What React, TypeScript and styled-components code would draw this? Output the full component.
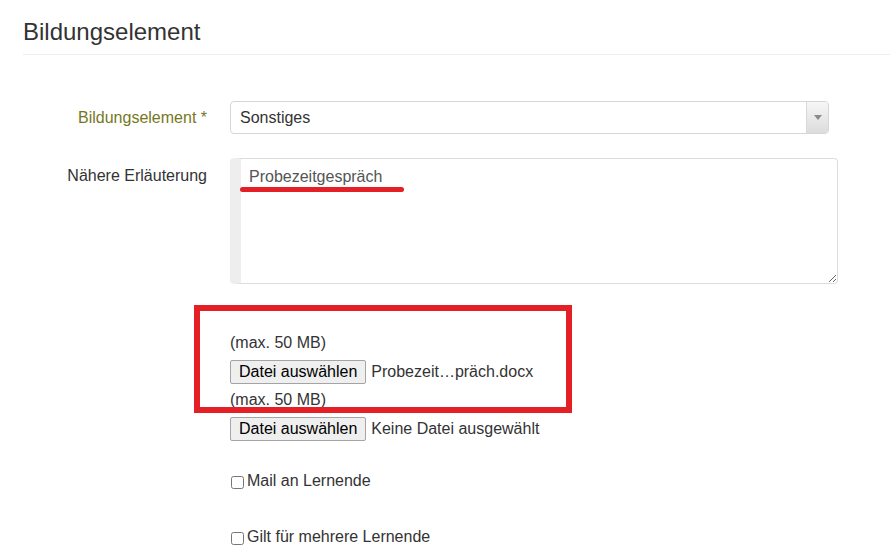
import React from "react";
import styled, { createGlobalStyle } from "styled-components";

const red = "#e41f26";
const text = "#333333";

const GlobalStyle = createGlobalStyle`
    html, body {
        margin: 0;
        padding: 0;
        background: #ffffff;
    }
    body {
        font-family: "Liberation Sans", Arial, sans-serif;
        font-size: 16px;
        color: ${text};
    }
`;

const Page = styled.div`
    width: 890px;
    height: 560px;
    padding-left: 23px;
    box-sizing: border-box;
    overflow: hidden;
`;

const Header = styled.div`
    padding: 19px 0 9px;
    border-bottom: 1px solid #eeeeee;
`;

const Title = styled.h2`
    margin: 0;
    font-size: 24px;
    line-height: 26px;
    font-weight: normal;
    color: ${text};
`;

const Form = styled.div`
    margin-top: 46px;
    display: flex;
    flex-direction: column;
`;

const Row = styled.div<{ $gap?: number }>`
    display: grid;
    grid-template-columns: 184px 1fr;
    column-gap: 23px;
    margin-top: ${(p) => p.$gap ?? 0}px;
`;

const Label = styled.label<{ $required?: boolean; $top?: number; $line?: number }>`
    text-align: right;
    color: ${(p) => (p.$required ? "#777722" : text)};
    padding-top: ${(p) => p.$top ?? 0}px;
    line-height: ${(p) => p.$line ?? 18}px;
`;

const SelectBox = styled.div`
    width: 599px;
    height: 33px;
    box-sizing: border-box;
    border: 1px solid #d6d6d6;
    border-radius: 4px;
    display: flex;
    align-items: stretch;
    overflow: hidden;
`;

const SelectValue = styled.div`
    flex: 1;
    padding-left: 9px;
    line-height: 32px;
    color: ${text};
`;

const ArrowBox = styled.div`
    width: 21px;
    border-left: 1px solid #d8d8d8;
    background: linear-gradient(#f6f6f6, #dcdcdc);
    display: flex;
    align-items: center;
    justify-content: center;

    &::after {
        content: "";
        border-left: 4px solid transparent;
        border-right: 4px solid transparent;
        border-top: 5px solid #8a8a8a;
    }
`;

const AreaWrap = styled.div`
    position: relative;
    width: 608px;
`;

const TextArea = styled.textarea`
    display: block;
    width: 608px;
    height: 126px;
    box-sizing: border-box;
    margin: 0;
    border: 1px solid #dddddd;
    border-left: 11px solid #eeeeee;
    border-radius: 4px;
    padding: 9px 8px;
    font-family: "Liberation Sans", Arial, sans-serif;
    font-size: 16px;
    line-height: 18px;
    color: #555555;
    outline: none;
`;

const Underline = styled.div`
    position: absolute;
    left: 10px;
    top: 29px;
    width: 164px;
    height: 5px;
    border-radius: 3px;
    background: ${red};
`;

const Files = styled.div`
    position: relative;
    margin: 50px 0 0 207px;
    display: flex;
    flex-direction: column;
    align-items: flex-start;
`;

const Marker = styled.div`
    position: absolute;
    left: -36px;
    top: -29px;
    width: 378px;
    height: 108px;
    box-sizing: border-box;
    border: 6px solid ${red};
    pointer-events: none;
`;

const Hint = styled.div`
    line-height: 18px;
    margin-bottom: 8px;
`;

const FileRow = styled.div<{ $gap?: number }>`
    display: flex;
    align-items: center;
    gap: 5px;
    height: 24px;
    margin-bottom: ${(p) => p.$gap ?? 0}px;
`;

const PickButton = styled.button`
    height: 24px;
    padding: 0 8px;
    font-family: "Liberation Sans", Arial, sans-serif;
    font-size: 16px;
    color: #000000;
    background: #efefef;
    border: 1px solid #a4a4a4;
    border-radius: 2px;
`;

const FileName = styled.span`
    color: ${text};
`;

const CheckRow = styled.label<{ $gap: number }>`
    display: flex;
    align-items: center;
    gap: 3px;
    line-height: 18px;
    margin-top: ${(p) => p.$gap}px;
    color: ${text};
`;

const Check = styled.input`
    width: 13px;
    height: 13px;
    margin: 3px 0 0 1px;
`;

function App() {
    return (
        <Page>
            <GlobalStyle />
            <Header>
                <Title>Bildungselement</Title>
            </Header>
            <Form>
                <Row>
                    <Label $required $line={33}>Bildungselement *</Label>
                    <SelectBox>
                        <SelectValue>Sonstiges</SelectValue>
                        <ArrowBox />
                    </SelectBox>
                </Row>
                <Row $gap={24}>
                    <Label $top={9}>Nähere Erläuterung</Label>
                    <AreaWrap>
                        <TextArea defaultValue="Probezeitgespräch" readOnly />
                        <Underline />
                    </AreaWrap>
                </Row>
                <Files>
                    <Marker />
                    <Hint>(max. 50 MB)</Hint>
                    <FileRow $gap={7}>
                        <PickButton>Datei auswählen</PickButton>
                        <FileName>Probezeit…präch.docx</FileName>
                    </FileRow>
                    <Hint>(max. 50 MB)</Hint>
                    <FileRow>
                        <PickButton>Datei auswählen</PickButton>
                        <FileName>Keine Datei ausgewählt</FileName>
                    </FileRow>
                    <CheckRow $gap={31}>
                        <Check type="checkbox" />
                        Mail an Lernende
                    </CheckRow>
                    <CheckRow $gap={38}>
                        <Check type="checkbox" />
                        Gilt für mehrere Lernende
                    </CheckRow>
                </Files>
            </Form>
        </Page>
    );
}

export default App;
